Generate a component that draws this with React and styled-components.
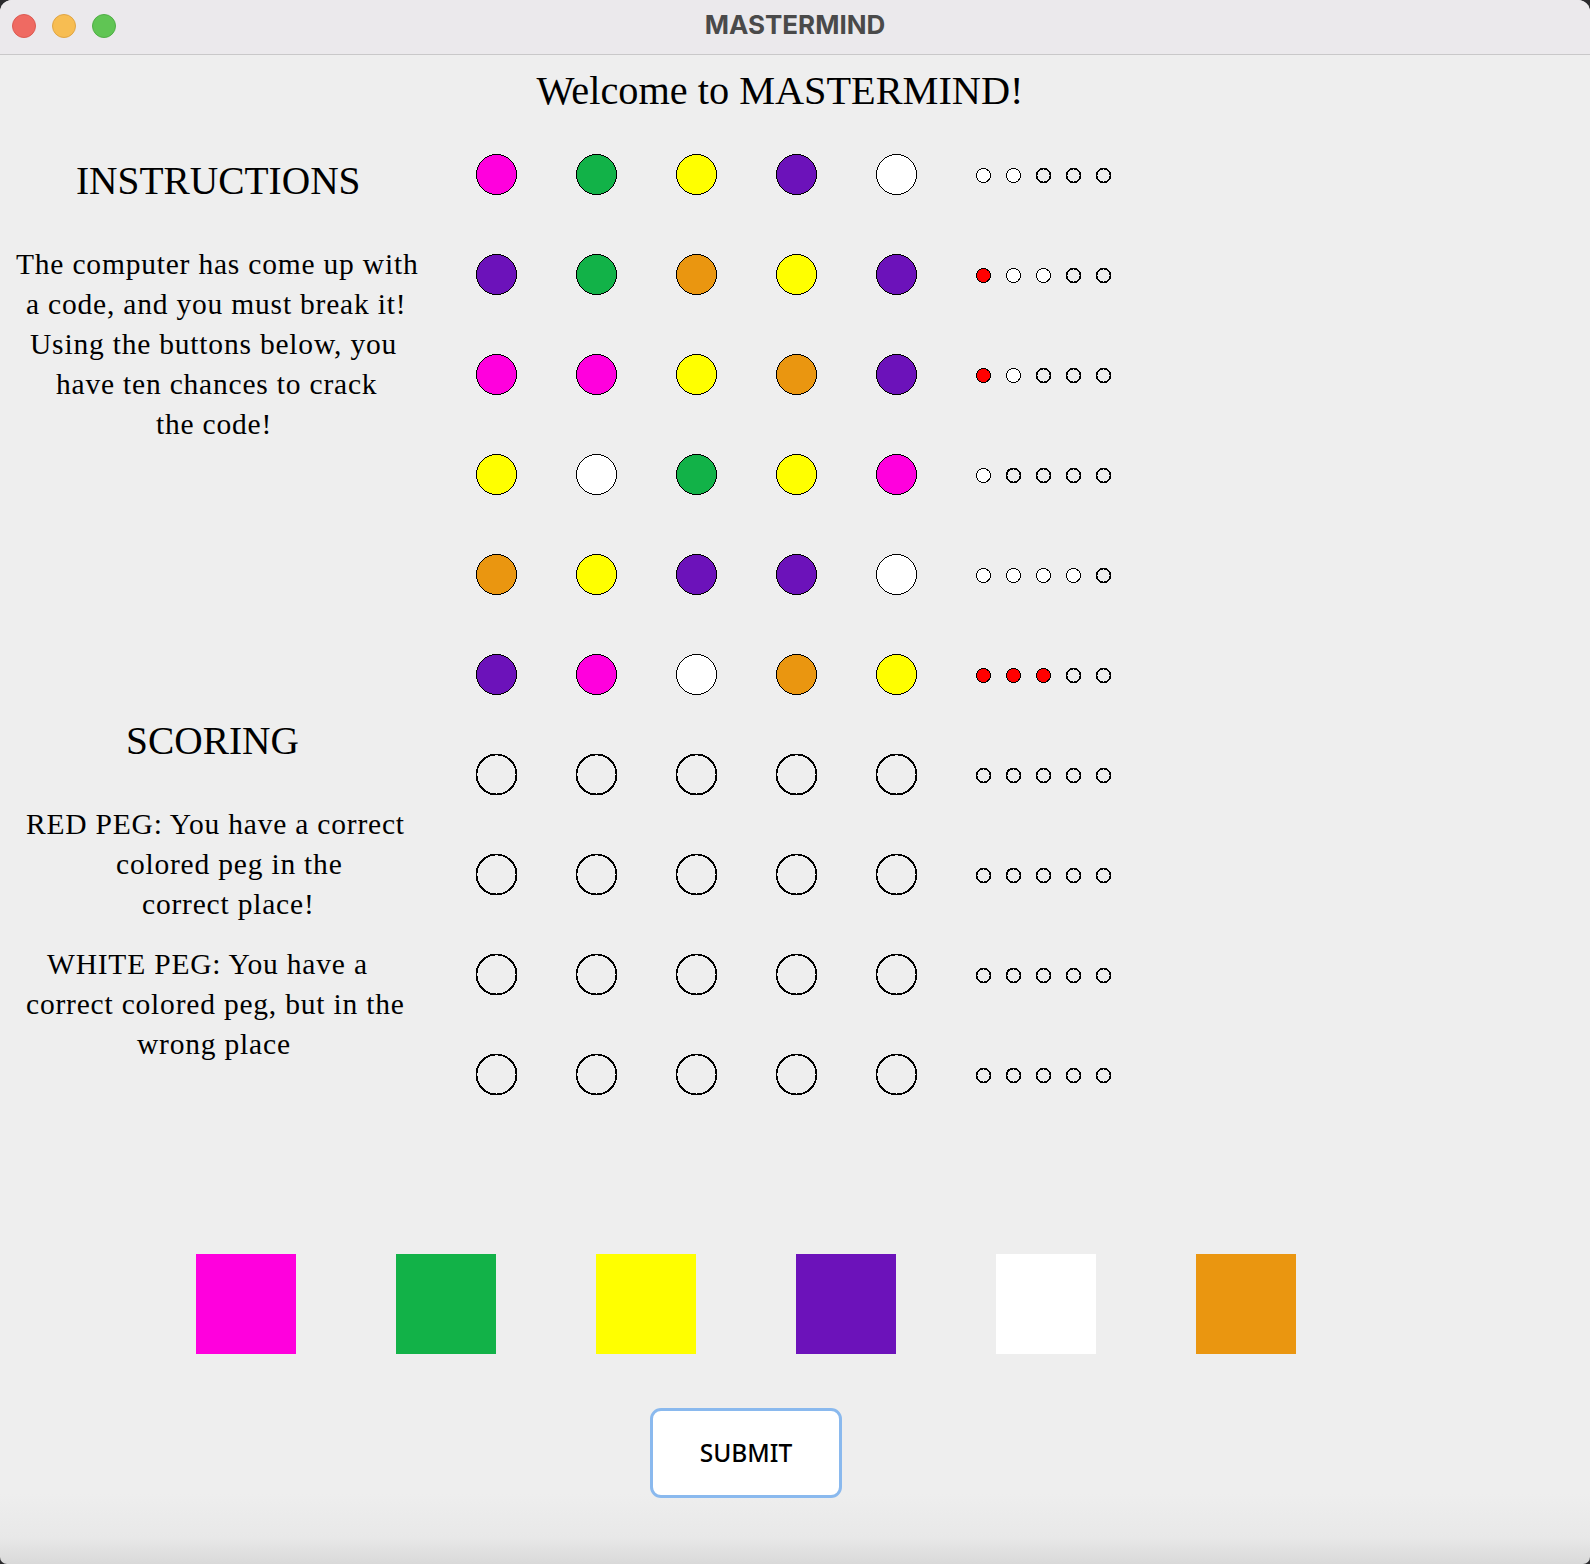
import styled, { createGlobalStyle } from "styled-components";

const COLORS = {
	m: "#ff00dd",
	g: "#12b248",
	y: "#ffff00",
	p: "#6c12ba",
	w: "#ffffff",
	o: "#ea9610",
	r: "#ff0000",
};

const GUESSES = [
	{ pegs: "mgypw", clues: "ww---" },
	{ pegs: "pgoyp", clues: "rww--" },
	{ pegs: "mmyop", clues: "rw---" },
	{ pegs: "ywgym", clues: "w----" },
	{ pegs: "oyppw", clues: "wwww-" },
	{ pegs: "pmwoy", clues: "rrr--" },
	{ pegs: "-----", clues: "-----" },
	{ pegs: "-----", clues: "-----" },
	{ pegs: "-----", clues: "-----" },
	{ pegs: "-----", clues: "-----" },
];

const INSTRUCTIONS = [
	{ x: 16, text: "The computer has come up with" },
	{ x: 26, text: "a code, and you must break it!" },
	{ x: 30, text: "Using the buttons below, you" },
	{ x: 56, text: "have ten chances to crack" },
	{ x: 156, text: "the code!" },
];

const RED_PEG = [
	{ x: 26, text: "RED PEG: You have a correct" },
	{ x: 116, text: "colored peg in the" },
	{ x: 142, text: "correct place!" },
];

const WHITE_PEG = [
	{ x: 47, text: "WHITE PEG: You have a" },
	{ x: 26, text: "correct colored peg, but in the" },
	{ x: 137, text: "wrong place" },
];

function Peg({ code, size }) {
	const empty = code === "-";
	const thick = size > 20 ? 1.8 : 1.7;
	return (
		<PegShape width={size} height={size} viewBox={`0 0 ${size} ${size}`}>
			<circle
				cx={size / 2}
				cy={size / 2}
				r={size / 2 - 0.5}
				fill={empty ? "none" : COLORS[code]}
				stroke="#000"
				strokeWidth={empty ? thick : 1}
			/>
		</PegShape>
	);
}

function TextLines({ lines }) {
	return (
		<Paragraph>
			{lines.map((line) => (
				<Line key={line.text} $x={line.x}>
					{line.text}
				</Line>
			))}
		</Paragraph>
	);
}

function App() {
	return (
		<Window>
			<GlobalStyle />
			<TitleBar>
				<Lights>
					<Light $color="#ef6a62" $edge="#dc5a52" />
					<Light $color="#f7bd52" $edge="#e0a544" />
					<Light $color="#60c554" $edge="#50ae46" />
				</Lights>
				<WindowTitle>MASTERMIND</WindowTitle>
			</TitleBar>
			<Welcome>Welcome to MASTERMIND!</Welcome>
			<Main>
				<Sidebar>
					<InstructionsTitle>INSTRUCTIONS</InstructionsTitle>
					<TextLines lines={INSTRUCTIONS} />
					<ScoringTitle>SCORING</ScoringTitle>
					<TextLines lines={RED_PEG} />
					<WhitePegBlock>
						<TextLines lines={WHITE_PEG} />
					</WhitePegBlock>
				</Sidebar>
				<Board>
					{GUESSES.map((guess, i) => (
						<GuessRow key={i}>
							<Holes>
								{guess.pegs.split("").map((code, j) => (
									<Hole key={j}>
										<Peg code={code} size={41} />
									</Hole>
								))}
							</Holes>
							<Clues>
								{guess.clues.split("").map((code, j) => (
									<Peg key={j} code={code} size={15} />
								))}
							</Clues>
						</GuessRow>
					))}
				</Board>
			</Main>
			<Controls>
				<Palette>
					{"mgypwo".split("").map((code) => (
						<Swatch key={code} $color={COLORS[code]} />
					))}
				</Palette>
				<SubmitButton>SUBMIT</SubmitButton>
			</Controls>
		</Window>
	);
}

const GlobalStyle = createGlobalStyle`
	html,
	body {
		margin: 0;
		padding: 0;
		background: #2b2b2e;
	}
	* {
		box-sizing: border-box;
	}
`;

const Window = styled.div`
	display: flex;
	flex-direction: column;
	width: 1590px;
	height: 1564px;
	overflow: hidden;
	border-radius: 12px 12px 7px 7px;
	background: linear-gradient(
		to bottom,
		#eeeeee calc(100% - 70px),
		#e8e8e8 calc(100% - 26px),
		#d9d9d9 100%
	);
	color: #000;
	font-family: "Liberation Serif", "Times New Roman", serif;
`;

const TitleBar = styled.header`
	display: flex;
	align-items: center;
	justify-content: center;
	position: relative;
	flex: none;
	height: 55px;
	padding-bottom: 5px;
	background: #ebe9ec;
	border-bottom: 1px solid #c9c8c9;
`;

const Lights = styled.div`
	position: absolute;
	top: 14px;
	left: 12px;
	display: flex;
	gap: 16px;
`;

const Light = styled.span`
	width: 24px;
	height: 24px;
	border-radius: 50%;
	background: ${(p) => p.$color};
	border: 1px solid ${(p) => p.$edge};
`;

const WindowTitle = styled.h1`
	margin: 0;
	color: #4a4a4a;
	font-family: Inter, "Liberation Sans", sans-serif;
	font-size: 26px;
	font-weight: 700;
`;

const Welcome = styled.h2`
	flex: none;
	width: 1560px;
	height: 44px;
	margin: 14px 0 41px;
	font-size: 40.3px;
	font-weight: 400;
	line-height: 44px;
	text-align: center;
	white-space: nowrap;
`;

const Main = styled.main`
	display: flex;
	flex: none;
	height: 941px;
`;

const Sidebar = styled.aside`
	flex: none;
	width: 476px;
	padding-top: 6px;
`;

const SectionTitle = styled.h3`
	margin: 0;
	font-size: 39.4px;
	font-weight: 400;
	line-height: 44px;
	white-space: nowrap;
`;

const InstructionsTitle = styled(SectionTitle)`
	padding-left: 76px;
	margin-top: -1px;
	margin-bottom: 41px;
`;

const ScoringTitle = styled(SectionTitle)`
	padding-left: 126px;
	margin-top: 275px;
	margin-bottom: 41px;
`;

const Paragraph = styled.div`
	font-size: 29.5px;
	letter-spacing: 0.8px;
	line-height: 40px;
`;

const Line = styled.div`
	padding-left: ${(p) => p.$x}px;
	white-space: nowrap;
`;

const WhitePegBlock = styled.div`
	margin-top: 20px;
`;

const Board = styled.section`
	display: flex;
	flex-direction: column;
	gap: 59px;
`;

const GuessRow = styled.div`
	display: flex;
	align-items: center;
	height: 41px;
`;

const Holes = styled.div`
	display: flex;
	width: 500px;
`;

const Hole = styled.div`
	width: 100px;
`;

const Clues = styled.div`
	display: flex;
	gap: 15px;
	padding-top: 2px;
`;

const PegShape = styled.svg`
	display: block;
	flex: none;
	shape-rendering: crispEdges;
`;

const Controls = styled.footer`
	display: flex;
	flex-direction: column;
	align-items: center;
	gap: 54px;
	width: 1492px;
	margin-top: 159px;
`;

const Palette = styled.div`
	display: flex;
	gap: 100px;
`;

const Swatch = styled.div`
	width: 100px;
	height: 100px;
	background: ${(p) => p.$color};
`;

const SubmitButton = styled.button`
	width: 192px;
	height: 90px;
	padding: 0 0 2px;
	background: #fff;
	border: 3px solid #8ab9ee;
	border-radius: 11px;
	color: #000;
	font-family: "Noto Sans", "Open Sans", sans-serif;
	font-size: 24.5px;
	font-weight: 500;
`;

export default App;
